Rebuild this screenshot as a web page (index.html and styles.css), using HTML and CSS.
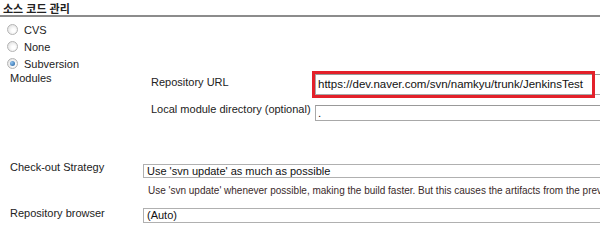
FILE: index.html
```html
<!DOCTYPE html>
<html lang="ko">
  <head>
    <meta charset="UTF-8" />
    <title>소스 코드 관리</title>
    <link rel="stylesheet" href="styles.css">
  </head>
  <body>
    <div class="section-title">소스 코드 관리</div>

    <div class="radio-list">
      <label class="radio-row"><span class="radio"></span>CVS</label>
      <label class="radio-row"><span class="radio"></span>None</label>
      <label class="radio-row"><span class="radio checked"></span>Subversion</label>
    </div>

    <div class="modules-label">Modules</div>
    <div class="modules">
      <div class="sub-label url-label">Repository URL</div>
      <div class="field url-field">
        <div class="input">https://dev.naver.com/svn/namkyu/trunk/JenkinsTest</div>
        <div class="highlight"></div>
      </div>
      <div class="sub-label local-label">Local module directory (optional)</div>
      <div class="field local-field">
        <div class="input small">.</div>
      </div>
    </div>

    <div class="settings">
      <div class="label strategy-label">Check-out Strategy</div>
      <div class="select strategy-select">Use 'svn update' as much as possible</div>
      <div></div>
      <div class="help">Use 'svn update' whenever possible, making the build faster. But this causes the artifacts from the previous build to remain when a new build starts.</div>
      <div class="label browser-label">Repository browser</div>
      <div class="select browser-select">(Auto)</div>
    </div>
  </body>
</html>
```

FILE: styles.css
```css
* {
  box-sizing: border-box;
}

body {
  margin: 0;
  width: 600px;
  overflow: hidden;
  background: #ffffff;
  color: #222222;
  font-family: "Liberation Sans", Arial, "Noto Sans CJK KR", sans-serif;
  font-size: 11px;
}

.section-title {
  padding: 4px 0 0 3px;
  height: 17px;
  font-weight: bold;
  font-size: 11px;
  line-height: 11px;
  font-family: "Liberation Sans", "Noto Sans CJK KR", sans-serif;
  border-bottom: 2px solid #8c8c8c;
}

.radio-list {
  padding: 4px 0 0 7px;
}

.radio-row {
  display: flex;
  align-items: center;
  gap: 6px;
  height: 17px;
}

.radio {
  width: 11px;
  height: 11px;
  border-radius: 50%;
  border: 1px solid #b4b4b4;
  background: radial-gradient(circle at 60% 60%, #ffffff 20%, #d8d8d8 100%);
  position: relative;
}

.radio.checked::after {
  content: "";
  position: absolute;
  left: 2px;
  top: 2px;
  width: 5px;
  height: 5px;
  border-radius: 50%;
  background: radial-gradient(circle at 35% 35%, #8fc3f0, #1d5c9c);
}

.modules-label {
  padding-left: 10px;
  height: 12px;
  line-height: 12px;
}

.modules {
  display: grid;
  grid-template-columns: 164px 1fr;
  padding-left: 151px;
  row-gap: 10px;
  margin-top: -12px;
}

.sub-label {
  line-height: 13px;
  white-space: nowrap;
}

.url-label {
  padding-top: 4px;
}

.local-label {
  margin-top: -2px;
}

.field {
  position: relative;
}

.input {
  height: 21px;
  border: 1px solid #a8a8a8;
  border-top-color: #999999;
  padding: 3px 0 0 2px;
  font-size: 11.5px;
  color: #111111;
  white-space: nowrap;
  overflow: hidden;
  margin-right: -4px;
}

.input.small {
  height: 16px;
  padding-top: 1px;
}

.url-field .input {
  margin-top: 2px;
}

.highlight {
  position: absolute;
  left: -3px;
  top: -1px;
  width: 283px;
  height: 27px;
  border: 3px solid #e3202a;
}

.settings {
  display: grid;
  grid-template-columns: 133px 1fr;
  padding-left: 10px;
  margin-top: 43px;
}

.label {
  line-height: 13px;
  margin-top: -3px;
}

.browser-label {
  margin-top: -1px;
}

.select {
  height: 14px;
  border: 1px solid #b0b0b0;
  border-right: none;
  padding: 0 0 0 3px;
  font-size: 11px;
  line-height: 13px;
  color: #111111;
  white-space: nowrap;
  overflow: hidden;
  margin-right: -4px;
}

.help {
  padding: 7px 0 0 5px;
  height: 30px;
  font-size: 10px;
  line-height: 11px;
  color: #3a2a2a;
  white-space: nowrap;
  overflow: hidden;
}

.browser-select {
  height: 15px;
}
```
